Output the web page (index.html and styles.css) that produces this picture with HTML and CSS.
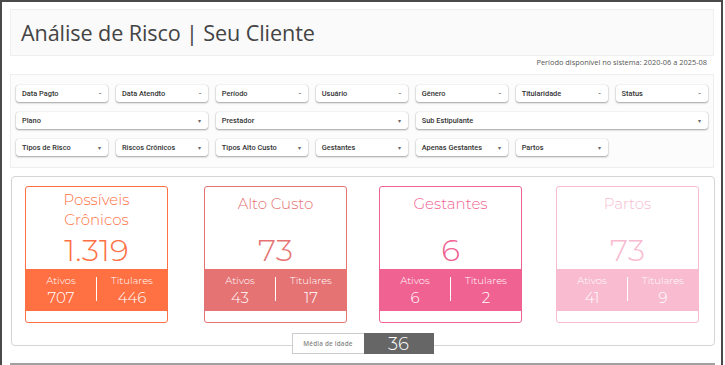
FILE: index.html
```html
<!DOCTYPE html>
<html lang="pt-BR">
<head>
<meta charset="utf-8">
<title>Análise de Risco | Seu Cliente</title>
<link rel="stylesheet" href="styles.css">
</head>
<body>
<div class="frame">
  <header class="header">
    <h1 class="title">Análise de Risco | Seu Cliente</h1>
  </header>
  <div class="period">Período disponível no sistema: 2020-06 a 2025-08</div>

  <section class="filters">
    <div class="sel"><span>Data Pagto</span><i class="dash">-</i></div>
    <div class="sel"><span>Data Atendto</span><i class="dash">-</i></div>
    <div class="sel"><span>Período</span><i class="dash">-</i></div>
    <div class="sel"><span>Usuário</span><i class="dash">-</i></div>
    <div class="sel"><span>Gênero</span><i class="dash">-</i></div>
    <div class="sel"><span>Titularidade</span><i class="dash">-</i></div>
    <div class="sel"><span>Status</span><i class="dash">-</i></div>

    <div class="sel span2"><span>Plano</span><i class="caret">▾</i></div>
    <div class="sel span2"><span>Prestador</span><i class="caret">▾</i></div>
    <div class="sel span3"><span>Sub Estipulante</span><i class="caret">▾</i></div>

    <div class="sel"><span>Tipos de Risco</span><i class="caret">▾</i></div>
    <div class="sel"><span>Riscos Crônicos</span><i class="caret">▾</i></div>
    <div class="sel"><span>Tipos Alto Custo</span><i class="caret">▾</i></div>
    <div class="sel"><span>Gestantes</span><i class="caret">▾</i></div>
    <div class="sel"><span>Apenas Gestantes</span><i class="caret">▾</i></div>
    <div class="sel"><span>Partos</span><i class="caret">▾</i></div>
  </section>

  <section class="cards">
    <div class="card c-orange">
      <div class="card-title">Possíveis<br>Crônicos</div>
      <div class="card-num">1.319</div>
      <div class="band">
        <div class="band-col"><div class="band-lbl">Ativos</div><div class="band-val">707</div></div>
        <div class="band-sep"></div>
        <div class="band-col"><div class="band-lbl">Titulares</div><div class="band-val">446</div></div>
      </div>
    </div>
    <div class="card c-red">
      <div class="card-title single">Alto Custo</div>
      <div class="card-num">73</div>
      <div class="band">
        <div class="band-col"><div class="band-lbl">Ativos</div><div class="band-val">43</div></div>
        <div class="band-sep"></div>
        <div class="band-col"><div class="band-lbl">Titulares</div><div class="band-val">17</div></div>
      </div>
    </div>
    <div class="card c-pink">
      <div class="card-title single">Gestantes</div>
      <div class="card-num">6</div>
      <div class="band">
        <div class="band-col"><div class="band-lbl">Ativos</div><div class="band-val">6</div></div>
        <div class="band-sep"></div>
        <div class="band-col"><div class="band-lbl">Titulares</div><div class="band-val">2</div></div>
      </div>
    </div>
    <div class="card c-light">
      <div class="card-title single">Partos</div>
      <div class="card-num">73</div>
      <div class="band">
        <div class="band-col"><div class="band-lbl">Ativos</div><div class="band-val">41</div></div>
        <div class="band-sep"></div>
        <div class="band-col"><div class="band-lbl">Titulares</div><div class="band-val">9</div></div>
      </div>
    </div>
  </section>

  <div class="age-row">
    <div class="age-lbl">Média de idade</div>
    <div class="age-val">36</div>
  </div>

  <div class="bottom-bar"></div>
</div>
</body>
</html>
```

FILE: styles.css
```css
* { box-sizing: border-box; }
html, body { margin: 0; padding: 0; background: #fff; }
body { font-family: "Open Sans", "Liberation Sans", sans-serif; overflow: hidden; }

.frame {
  width: 723px;
  height: 400px;
  border: 2px solid #4a4a4a;
  border-bottom: none;
  padding: 7px 7px 0 8px;
}

.header {
  height: 47px;
  background: #fafafa;
  border: 1px solid #efefef;
  display: flex;
  align-items: center;
  padding-left: 10px;
}
.title {
  margin: 0;
  font-size: 21.6px;
  font-weight: 400;
  color: #444;
  letter-spacing: -0.1px;
}

.period {
  height: 11px;
  margin-top: 1px;
  text-align: right;
  padding-right: 7px;
  font-size: 7.4px;
  line-height: 11px;
  color: #555;
}

.filters {
  margin-top: 6px;
  background: #fcfcfc;
  border: 1px solid #eee;
  padding: 10px 5px 11px 5px;
  display: grid;
  grid-template-columns: repeat(7, 1fr);
  column-gap: 7.5px;
  row-gap: 10px;
  width: 704px;
}
.sel {
  height: 17px;
  background: #fff;
  border-radius: 3px;
  box-shadow: 0 1px 2px rgba(0,0,0,0.35), 0 0 1px rgba(0,0,0,0.25);
  display: flex;
  align-items: center;
  justify-content: space-between;
  padding: 0 7px 0 6px;
  font-family: Roboto, "Liberation Sans", sans-serif;
  font-weight: 500;
  font-size: 7.4px;
  color: #333;
}
.sel i { font-style: normal; color: #666; }
.sel .dash { font-size: 8px; }
.sel .caret { font-size: 6px; }
.span2 { grid-column: span 2; }
.span3 { grid-column: span 3; }

.cards {
  margin-top: 8px;
  margin-left: 1px;
  width: 704px;
  height: 170px;
  border: 1px solid #d4d4d4;
  border-radius: 4px;
  display: grid;
  grid-template-columns: 143px 143px 143px 143px;
  column-gap: 34px;
  align-items: start;
  padding: 9px 0 0 13px;
}
.card {
  width: 143px;
  height: 137px;
  border: 1px solid;
  border-radius: 3px;
  display: flex;
  flex-direction: column;
  font-family: "Montserrat", "Open Sans", sans-serif;
  font-weight: 300;
  text-align: center;
}
.c-red { margin-left: 2px; }
.card-title {
  height: 44px;
  padding-top: 3px;
  font-size: 15px;
  line-height: 20px;
}
.card-title.single { padding-top: 7px; }
.card-num {
  height: 38px;
  font-size: 31px;
  line-height: 38px;
}
.band {
  height: 42px;
  display: flex;
  align-items: center;
  color: #fff;
}
.band-col { flex: 1; padding-top: 1px; }
.band-lbl { font-size: 10px; line-height: 14px; }
.band-val { font-size: 15px; line-height: 19px; }
.band-sep { width: 1px; height: 24px; background: #fff; margin-top: -2px; }

.c-orange { border-color: #ff7043; color: #ff7043; }
.c-orange .band { background: #ff7043; }
.c-red { border-color: #e57373; color: #e57373; }
.c-red .band { background: #e57373; }
.c-pink { border-color: #f06292; color: #f06292; }
.c-pink .band { background: #f06292; }
.c-light { border-color: #f8bbd0; color: #f8bbd0; }
.c-light .band { background: #f8bbd0; }

.age-row {
  display: flex;
  justify-content: center;
  margin-top: -13px;
  height: 21px;
  position: relative;
  padding-left: 1px;
}
.age-lbl {
  width: 72px;
  background: #fff;
  border: 1px solid #ccc;
  border-right: none;
  font-family: "Open Sans", sans-serif;
  font-weight: 600;
  font-size: 6.3px;
  color: #888;
  display: flex;
  align-items: center;
  justify-content: center;
  letter-spacing: 0.2px;
}
.age-val {
  width: 70px;
  background: #666;
  color: #fff;
  font-family: "Montserrat", "Open Sans", sans-serif;
  font-weight: 300;
  font-size: 18px;
  display: flex;
  align-items: center;
  justify-content: center;
}

.bottom-bar {
  margin-top: 9px;
  height: 10px;
  background: #a0a0a0;
  width: 705px;
}
```
